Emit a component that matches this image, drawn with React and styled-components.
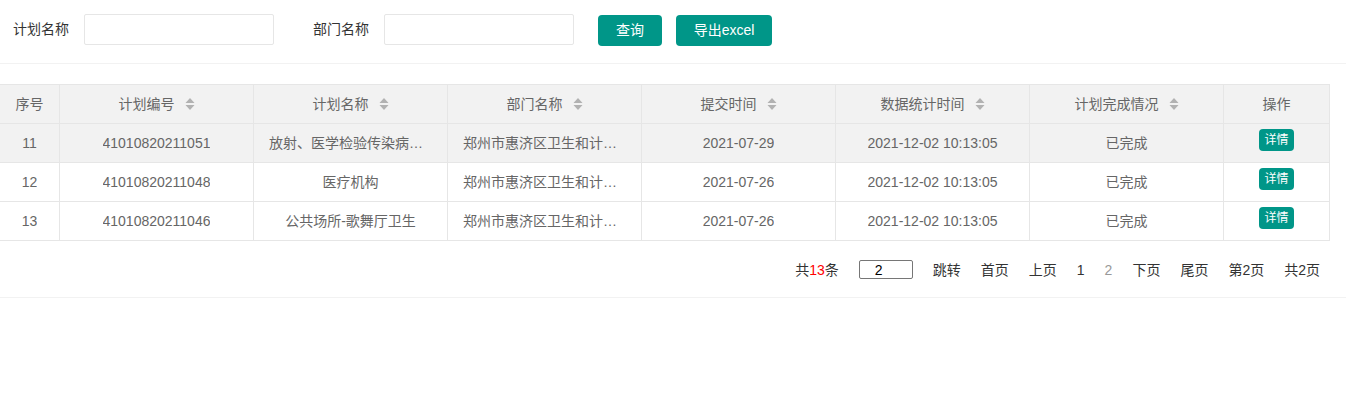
import React from "react";
import styled, { createGlobalStyle } from "styled-components";

const Global = createGlobalStyle`
  html, body { margin: 0; padding: 0; background: #fff; }
  body {
    font-family: "Liberation Sans", "Microsoft YaHei", "Noto Sans CJK SC", sans-serif;
    font-size: 14px;
    color: #333;
  }
  * { box-sizing: border-box; }
`;

const Page = styled.div`
  width: 1346px;
`;

const SearchBar = styled.div`
  display: flex;
  align-items: center;
  height: 64px;
  padding: 0 0 5px 13px;
  width: 1346px;
  border-bottom: 1px solid #f2f2f2;
`;

const Label = styled.label`
  font-size: 14px;
  line-height: 20px;
  color: #333;
  margin-left: ${(p) => (p.$first ? "0" : "39px")};
  margin-right: 15px;
`;

const TextInput = styled.input`
  width: 190px;
  height: 31px;
  border: 1px solid #e6e6e6;
  border-radius: 2px;
  outline: none;
  padding: 0 10px;
  background: #fff;
`;

const Buttons = styled.div`
  display: flex;
  gap: 14px;
  margin-left: 24px;
  margin-top: 2px;
`;

const Button = styled.button`
  width: ${(p) => p.$w}px;
  height: 31px;
  padding: 0;
  border: none;
  border-radius: 4px;
  background: #009688;
  color: #fff;
  font-family: inherit;
  font-size: 14px;
  line-height: 31px;
  text-align: center;
  cursor: pointer;
`;

const TableWrap = styled.div`
  margin-top: 20px;
  width: 1330px;
  border-top: 1px solid #e6e6e6;
`;

const Row = styled.div`
  display: grid;
  grid-template-columns: 60px repeat(6, 194px) 106px;
  border-bottom: 1px solid #e6e6e6;
  background: ${(p) => (p.$gray ? "#f2f2f2" : "#fff")};
`;

const Cell = styled.div`
  height: 38px;
  padding: ${(p) => (p.$top ? "5px 15px 0" : "0 15px")};
  border-right: 1px solid #e6e6e6;
  display: flex;
  align-items: ${(p) => (p.$top ? "flex-start" : "center")};
  justify-content: center;
  color: #666;
  font-size: 14px;
  line-height: 20px;
  min-width: 0;
`;

const Ellipsis = styled.span`
  display: block;
  overflow: hidden;
  white-space: nowrap;
  text-overflow: ellipsis;
  text-align: center;
  max-width: 100%;
`;

const SortIcon = styled.svg`
  margin-left: 10px;
  flex: none;
`;

const DetailBtn = styled.button`
  height: 22px;
  padding: 0 5px;
  border: none;
  border-radius: 4px;
  background: #009688;
  color: #fff;
  font-family: inherit;
  font-size: 12px;
  line-height: 22px;
  cursor: pointer;
`;

const Pager = styled.div`
  width: 1346px;
  height: 57px;
  border-bottom: 1px solid #f2f2f2;
`;

const PagerInner = styled.div`
  width: 1330px;
  height: 56px;
  display: flex;
  align-items: center;
  justify-content: flex-end;
  padding-top: 1px;
`;

const PageItem = styled.span`
  padding: 0 10px;
  font-size: 14px;
  line-height: 20px;
  color: ${(p) => (p.$current ? "#999" : "#333")};
  cursor: ${(p) => (p.$current ? "default" : "pointer")};
`;

const Red = styled.span`
  color: #ff0000;
`;

const JumpInput = styled.input`
  width: 54px;
  height: 19px;
  margin: 0 10px;
  border: 1px solid #767676;
  border-radius: 2px;
  padding: 0 0 0 15px;
  font-family: inherit;
  font-size: 14px;
  color: #000;
  outline: none;
`;

const Sort = () => (
  <SortIcon width="10" height="13" viewBox="0 0 10 13">
    <path d="M5 0 L9.5 5 L0.5 5 Z" fill="#b2b2b2" />
    <path d="M0.5 7 L9.5 7 L5 12 Z" fill="#b2b2b2" />
  </SortIcon>
);

const headers = [
  { t: "序号" },
  { t: "计划编号", s: true },
  { t: "计划名称", s: true },
  { t: "部门名称", s: true },
  { t: "提交时间", s: true },
  { t: "数据统计时间", s: true },
  { t: "计划完成情况", s: true },
  { t: "操作" },
];

const rows = [
  ["11", "41010820211051", "放射、医学检验传染病防治卫生", "郑州市惠济区卫生和计划生育委员会", "2021-07-29", "2021-12-02 10:13:05", "已完成"],
  ["12", "41010820211048", "医疗机构", "郑州市惠济区卫生和计划生育委员会", "2021-07-26", "2021-12-02 10:13:05", "已完成"],
  ["13", "41010820211046", "公共场所-歌舞厅卫生", "郑州市惠济区卫生和计划生育委员会", "2021-07-26", "2021-12-02 10:13:05", "已完成"],
];

export default function App() {
  return (
    <Page>
      <Global />
      <SearchBar>
        <Label $first>计划名称</Label>
        <TextInput />
        <Label>部门名称</Label>
        <TextInput />
        <Buttons>
          <Button $w={64}>查询</Button>
          <Button $w={96}>导出excel</Button>
        </Buttons>
      </SearchBar>

      <TableWrap>
        <Row $gray>
          {headers.map((h) => (
            <Cell key={h.t}>
              <span>{h.t}</span>
              {h.s && <Sort />}
            </Cell>
          ))}
        </Row>
        {rows.map((r, i) => (
          <Row key={r[0]} $gray={i === 0}>
            {r.map((c, j) => (
              <Cell key={j}>
                <Ellipsis>{c}</Ellipsis>
              </Cell>
            ))}
            <Cell $top>
              <DetailBtn>详情</DetailBtn>
            </Cell>
          </Row>
        ))}
      </TableWrap>

      <Pager>
        <PagerInner>
          <PageItem>
            共<Red>13</Red>条
          </PageItem>
          <JumpInput defaultValue="2" />
          <PageItem>跳转</PageItem>
          <PageItem>首页</PageItem>
          <PageItem>上页</PageItem>
          <PageItem>1</PageItem>
          <PageItem $current>2</PageItem>
          <PageItem>下页</PageItem>
          <PageItem>尾页</PageItem>
          <PageItem>第2页</PageItem>
          <PageItem>共2页</PageItem>
        </PagerInner>
      </Pager>
    </Page>
  );
}
